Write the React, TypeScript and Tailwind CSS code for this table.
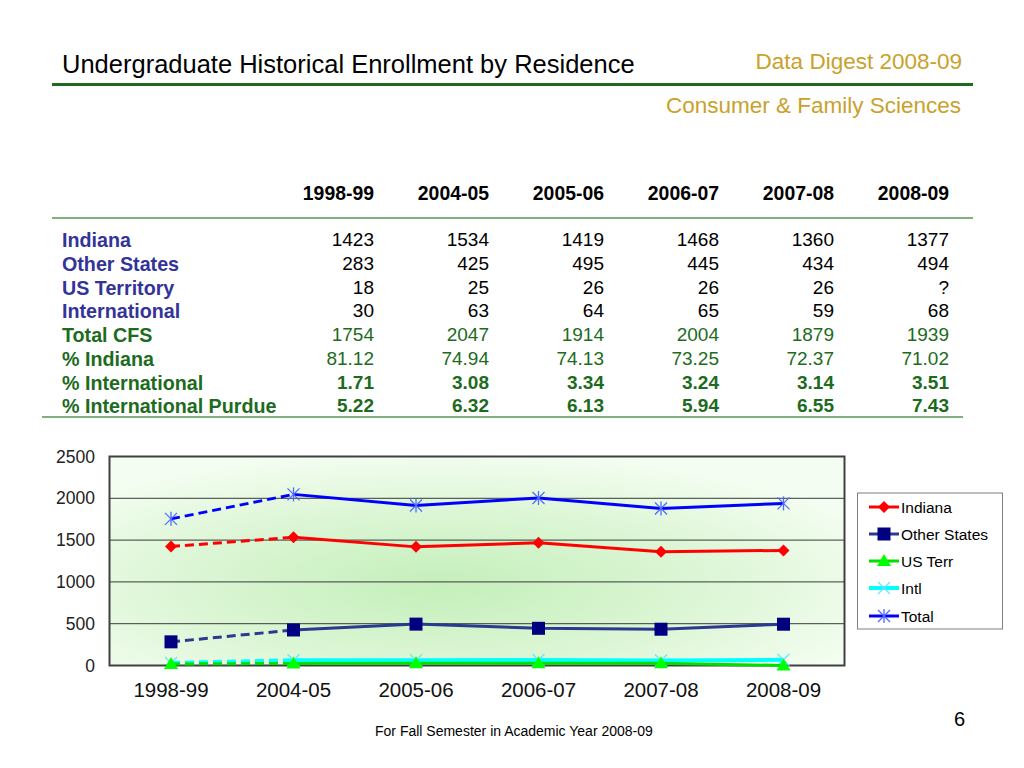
import React from "react";

const years = ["1998-99", "2004-05", "2005-06", "2006-07", "2007-08", "2008-09"];

type Row = { label: string; lc: string; vc: string; vals: string[] };

const rows: Row[] = [
  { label: "Indiana", lc: "text-[#333399] font-bold", vc: "text-black", vals: ["1423", "1534", "1419", "1468", "1360", "1377"] },
  { label: "Other States", lc: "text-[#333399] font-bold", vc: "text-black", vals: ["283", "425", "495", "445", "434", "494"] },
  { label: "US Territory", lc: "text-[#333399] font-bold", vc: "text-black", vals: ["18", "25", "26", "26", "26", "?"] },
  { label: "International", lc: "text-[#333399] font-bold", vc: "text-black", vals: ["30", "63", "64", "65", "59", "68"] },
  { label: "Total CFS", lc: "text-[#1d6b1d] font-bold", vc: "text-[#1d6b1d]", vals: ["1754", "2047", "1914", "2004", "1879", "1939"] },
  { label: "% Indiana", lc: "text-[#1d6b1d] font-bold", vc: "text-[#1d6b1d]", vals: ["81.12", "74.94", "74.13", "73.25", "72.37", "71.02"] },
  { label: "% International", lc: "text-[#1d6b1d] font-bold", vc: "text-[#1d6b1d] font-bold", vals: ["1.71", "3.08", "3.34", "3.24", "3.14", "3.51"] },
  { label: "% International Purdue", lc: "text-[#1d6b1d] font-bold", vc: "text-[#1d6b1d] font-bold", vals: ["5.22", "6.32", "6.13", "5.94", "6.55", "7.43"] },
];

const X0 = 171;
const DX = 122.5;
const TOP = 457.5;
const BOT = 666.5;
const px = (i: number) => X0 + DX * i;
const py = (v: number) => BOT - (v * (BOT - TOP)) / 2500;

type MarkerKind = "diamond" | "square" | "triangle" | "x" | "star";

function Marker({ kind, x, y, color }: { kind: MarkerKind; x: number; y: number; color: string }) {
  if (kind === "diamond")
    return <polygon points={`${x},${y - 6} ${x + 6},${y} ${x},${y + 6} ${x - 6},${y}`} fill={color} />;
  if (kind === "square") return <rect x={x - 6.5} y={y - 6.5} width={13} height={13} fill={color} />;
  if (kind === "triangle")
    return <polygon points={`${x},${y - 7} ${x - 7},${y + 5} ${x + 7},${y + 5}`} fill={color} />;
  if (kind === "x")
    return (
      <g stroke={color} strokeWidth={1.3}>
        <line x1={x - 6} y1={y - 6} x2={x + 6} y2={y + 6} />
        <line x1={x - 6} y1={y + 6} x2={x + 6} y2={y - 6} />
      </g>
    );
  return (
    <g stroke={color} strokeWidth={1.3}>
      <line x1={x - 6} y1={y - 6} x2={x + 6} y2={y + 6} />
      <line x1={x - 6} y1={y + 6} x2={x + 6} y2={y - 6} />
      <line x1={x} y1={y - 7} x2={x} y2={y + 7} />
    </g>
  );
}

type Series = { name: string; vals: number[]; line: string; mark: string; kind: MarkerKind; w: number };

const series: Series[] = [
  { name: "Intl", vals: [30, 63, 64, 65, 59, 68], line: "#00ffff", mark: "#66e6ff", kind: "x", w: 4 },
  { name: "US Terr", vals: [18, 25, 26, 26, 26, 0], line: "#00e000", mark: "#00ff00", kind: "triangle", w: 3 },
  { name: "Other States", vals: [283, 425, 495, 445, 434, 494], line: "#2b3990", mark: "#000080", kind: "square", w: 3 },
  { name: "Indiana", vals: [1423, 1534, 1419, 1468, 1360, 1377], line: "#ff0000", mark: "#ff0000", kind: "diamond", w: 3 },
  { name: "Total", vals: [1754, 2047, 1914, 2004, 1879, 1939], line: "#0000ff", mark: "#4d6bff", kind: "star", w: 3 },
];

const legend: Series[] = [series[3], series[2], series[1], series[0], series[4]];
const legendY = [508, 535, 562, 589, 617];

function Chart() {
  const font = "'Liberation Sans', Arial, sans-serif";
  return (
    <svg width={1024} height={270} viewBox="0 440 1024 270" className="block">
      <defs>
        <radialGradient id="plotbg" cx="45%" cy="62%" r="65%">
          <stop offset="0" stopColor="#c4efba" />
          <stop offset="0.55" stopColor="#dcf6d5" />
          <stop offset="1" stopColor="#f4fdf1" />
        </radialGradient>
      </defs>
      <rect x={109.5} y={TOP} width={735} height={BOT - TOP} fill="url(#plotbg)" />
      {[2000, 1500, 1000, 500].map((v) => (
        <line key={v} x1={110} x2={844} y1={py(v)} y2={py(v)} stroke="#3a3a3a" strokeWidth={1} />
      ))}
      <rect x={109.5} y={TOP} width={735} height={BOT - TOP} fill="none" stroke="#404040" strokeWidth={2} />
      {[0, 500, 1000, 1500, 2000, 2500].map((v) => (
        <text key={v} x={95} y={py(v) + 6} textAnchor="end" fontFamily={font} fontSize={17.5} fill="#222">
          {v}
        </text>
      ))}
      {years.map((y, i) => (
        <text key={y} x={px(i)} y={698} textAnchor="middle" fontFamily={font} fontSize={20.5} fill="#111">
          {y}
        </text>
      ))}
      {series.map((s) => {
        const solid = s.vals
          .slice(1)
          .map((v, i) => `${i === 0 ? "M" : "L"}${px(i + 1)},${py(v)}`)
          .join(" ");
        return (
          <g key={s.name}>
            <line
              x1={px(0)}
              y1={py(s.vals[0])}
              x2={px(1)}
              y2={py(s.vals[1])}
              stroke={s.line}
              strokeWidth={s.w}
              strokeDasharray="9 5"
            />
            <path d={solid} fill="none" stroke={s.line} strokeWidth={s.w} strokeLinejoin="round" />
            {s.vals.map((v, i) => (
              <Marker key={i} kind={s.kind} x={px(i)} y={py(v)} color={s.mark} />
            ))}
          </g>
        );
      })}
      <rect x={857.5} y={494} width={145} height={136} fill="#fff" stroke="#7f7f7f" strokeWidth={1} />
      {legend.map((s, i) => (
        <g key={s.name}>
          <line x1={869} x2={899} y1={legendY[i]} y2={legendY[i]} stroke={s.line} strokeWidth={s.w} />
          <Marker kind={s.kind} x={884} y={legendY[i]} color={s.mark} />
          <text x={901} y={legendY[i] + 5.5} fontFamily={font} fontSize={15.5} fill="#000">
            {s.name}
          </text>
        </g>
      ))}
    </svg>
  );
}

export default function App() {
  return (
    <div
      className="w-[1024px] h-[768px] bg-white overflow-hidden flex flex-col"
      style={{ fontFamily: "'Liberation Sans', Arial, Helvetica, sans-serif" }}
    >
      <div className="flex items-start justify-between pl-[62px] pr-[62px] pt-[49px]">
        <h1 className="text-[25.5px] leading-[30px] text-black font-normal whitespace-nowrap">
          Undergraduate Historical Enrollment by Residence
        </h1>
        <div className="text-[22.5px] leading-[26px] text-[#c9a12b] whitespace-nowrap">Data Digest 2008-09</div>
      </div>
      <div className="ml-[52px] w-[921px] h-[3px] mt-[4px] bg-[#1d6b1d]" />
      <div className="self-end pr-[63px] mt-[7px] text-[22.5px] leading-[26px] text-[#c9a12b] whitespace-nowrap">
        Consumer &amp; Family Sciences
      </div>

      <div className="ml-[52px] w-[921px] mt-[63px]">
        <div className="grid grid-cols-[207px_repeat(6,115px)] h-[23.75px] leading-[22px] text-[19.4px] font-bold text-black">
          <div />
          {years.map((y) => (
            <div key={y} className="text-right">
              {y}
            </div>
          ))}
        </div>
        <div className="h-[2px] mt-[11.25px] bg-[#7fb07f]" />
        <div className="mt-[10px]">
          {rows.map((r, ri) => (
            <div
              key={r.label}
              className={`grid grid-cols-[207px_repeat(6,115px)] leading-[22px] text-[19px] ${
                ri === rows.length - 1 ? "h-[21px]" : "h-[23.75px]"
              }`}
            >
              <div className={`pl-[10px] whitespace-nowrap text-[19.7px] ${r.lc}`}>{r.label}</div>
              {r.vals.map((v, i) => (
                <div key={i} className={`text-right ${r.vc}`}>
                  {v}
                </div>
              ))}
            </div>
          ))}
        </div>
        <div className="h-[2px] -ml-[10px] w-[921px] bg-[#7fb07f]" />
      </div>

      <div className="mt-[21px]">
        <Chart />
      </div>

      <div className="flex items-start">
        <div className="ml-[375px] mt-[14px] text-[14px] leading-[16px] text-black whitespace-nowrap">
          For Fall Semester in Academic Year 2008-09
        </div>
        <div className="ml-auto mr-[59px] text-[20px] leading-[20px] text-black">6</div>
      </div>
    </div>
  );
}
